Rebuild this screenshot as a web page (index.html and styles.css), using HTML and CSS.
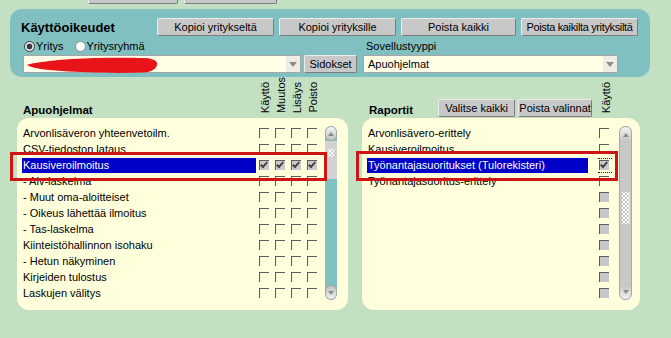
FILE: index.html
```html
<!DOCTYPE html>
<html>
<head>
<meta charset="utf-8">
<link rel="stylesheet" href="styles.css">
</head>
<body>
<div class="topcut"><div class="btn tc1"></div><div class="btn tc2"></div></div>

<div class="panel">
  <div class="prow">
    <div class="title">Käyttöoikeudet</div>
    <div class="btns">
      <div class="btn w117">Kopioi yritykseltä</div>
      <div class="btn w117">Kopioi yrityksille</div>
      <div class="btn w115">Poista kaikki</div>
      <div class="btn w117 tight">Poista kaikilta yrityksiltä</div>
    </div>
  </div>
  <div class="pgrid">
    <div class="radios">
      <span class="radio on"></span><span class="rlabel">Yritys</span>
      <span class="radio second"></span><span class="rlabel">Yritysryhmä</span>
    </div>
    <div class="lbl">Sovellustyyppi</div>
    <div class="selrow">
      <div class="select s1">
        <svg class="scribble" width="140" height="18" viewBox="0 0 140 18"><path d="M2,9 C6,7 30,4 47,3 C70,1.5 100,1.5 120,2 C130,2.5 133,6 132,9 C131,13 127,16 118,16.5 C90,17.5 60,16.5 37,15 C20,14 6,12 2,9 Z" fill="#e8141a"/></svg>
        <span class="arrow"></span>
      </div>
      <div class="btn sid">Sidokset</div>
    </div>
    <div class="select s2"><span class="txt">Apuohjelmat</span><span class="arrow"></span></div>
  </div>
</div>

<div class="lower">
  <section class="col left">
    <div class="hdr">
      <div class="sect">Apuohjelmat</div>
      <div class="vlabel">Käyttö</div>
      <div class="vlabel">Muutos</div>
      <div class="vlabel">Lisäys</div>
      <div class="vlabel">Poisto</div>
    </div>
    <div class="box">
      <div class="list">
        <div class="row"><div class="name">Arvonlisäveron yhteenvetoilm.</div><div class="cell"><span class="cb"></span></div><div class="cell"><span class="cb"></span></div><div class="cell"><span class="cb"></span></div><div class="cell"><span class="cb"></span></div></div>
        <div class="row"><div class="name">CSV-tiedoston lataus</div><div class="cell"><span class="cb"></span></div><div class="cell"><span class="cb"></span></div><div class="cell"><span class="cb"></span></div><div class="cell"><span class="cb"></span></div></div>
        <div class="row"><div class="name sel">Kausiveroilmoitus</div>
          <div class="cell"><span class="cb on"><svg viewBox="0 0 10 10"><path d="M1.8 4.6 L4 7 L8.2 2"/></svg></span></div>
          <div class="cell"><span class="cb on"><svg viewBox="0 0 10 10"><path d="M1.8 4.6 L4 7 L8.2 2"/></svg></span></div>
          <div class="cell"><span class="cb on"><svg viewBox="0 0 10 10"><path d="M1.8 4.6 L4 7 L8.2 2"/></svg></span></div>
          <div class="cell"><span class="cb on"><svg viewBox="0 0 10 10"><path d="M1.8 4.6 L4 7 L8.2 2"/></svg></span></div>
        </div>
        <div class="row"><div class="name">- Alv-laskelma</div><div class="cell"><span class="cb"></span></div><div class="cell"><span class="cb"></span></div><div class="cell"><span class="cb"></span></div><div class="cell"><span class="cb"></span></div></div>
        <div class="row"><div class="name">- Muut oma-aloitteiset</div><div class="cell"><span class="cb"></span></div><div class="cell"><span class="cb"></span></div><div class="cell"><span class="cb"></span></div><div class="cell"><span class="cb"></span></div></div>
        <div class="row"><div class="name">- Oikeus lähettää ilmoitus</div><div class="cell"><span class="cb"></span></div><div class="cell"><span class="cb"></span></div><div class="cell"><span class="cb"></span></div><div class="cell"><span class="cb"></span></div></div>
        <div class="row"><div class="name">- Tas-laskelma</div><div class="cell"><span class="cb"></span></div><div class="cell"><span class="cb"></span></div><div class="cell"><span class="cb"></span></div><div class="cell"><span class="cb"></span></div></div>
        <div class="row"><div class="name">Kiinteistöhallinnon isohaku</div><div class="cell"><span class="cb"></span></div><div class="cell"><span class="cb"></span></div><div class="cell"><span class="cb"></span></div><div class="cell"><span class="cb"></span></div></div>
        <div class="row"><div class="name">- Hetun näkyminen</div><div class="cell"><span class="cb"></span></div><div class="cell"><span class="cb"></span></div><div class="cell"><span class="cb"></span></div><div class="cell"><span class="cb"></span></div></div>
        <div class="row"><div class="name">Kirjeiden tulostus</div><div class="cell"><span class="cb"></span></div><div class="cell"><span class="cb"></span></div><div class="cell"><span class="cb"></span></div><div class="cell"><span class="cb"></span></div></div>
        <div class="row"><div class="name">Laskujen välitys</div><div class="cell"><span class="cb"></span></div><div class="cell"><span class="cb"></span></div><div class="cell"><span class="cb"></span></div><div class="cell"><span class="cb"></span></div></div>
      </div>
      <div class="sb">
        <div class="sbbtn up"></div>
        <div class="thumb"><span class="grip"></span></div>
        <div class="track"></div>
        <div class="sbbtn down"></div>
      </div>
    </div>
  </section>

  <section class="col right">
    <div class="hdr">
      <div class="sect">Raportit</div>
      <div class="hbtns">
        <div class="btn w77">Valitse kaikki</div>
        <div class="btn w74">Poista valinnat</div>
      </div>
      <div class="vlabel">Käyttö</div>
    </div>
    <div class="box">
      <div class="list">
        <div class="row"><div class="name">Arvonlisävero-erittely</div><div class="cell"><span class="cb"></span></div></div>
        <div class="row"><div class="name">Kausiveroilmoitus</div><div class="cell"><span class="cb"></span></div></div>
        <div class="row"><div class="name sel">Työnantajasuoritukset (Tulorekisteri)</div><div class="cell"><span class="cb on focus"><svg viewBox="0 0 10 10"><path d="M1.8 4.6 L4 7 L8.2 2"/></svg></span></div></div>
        <div class="row"><div class="name">Työnantajasuoritus-erittely</div><div class="cell"><span class="cb"></span></div></div>
        <div class="row"><div class="name"></div><div class="cell"><span class="cb dis"></span></div></div>
        <div class="row"><div class="name"></div><div class="cell"><span class="cb dis"></span></div></div>
        <div class="row"><div class="name"></div><div class="cell"><span class="cb dis"></span></div></div>
        <div class="row"><div class="name"></div><div class="cell"><span class="cb dis"></span></div></div>
        <div class="row"><div class="name"></div><div class="cell"><span class="cb dis"></span></div></div>
        <div class="row"><div class="name"></div><div class="cell"><span class="cb dis"></span></div></div>
        <div class="row"><div class="name"></div><div class="cell"><span class="cb dis"></span></div></div>
      </div>
      <div class="sb">
        <div class="sbbtn up"></div>
        <div class="thumb"><span class="grip"></span></div>
        <div class="track"></div>
        <div class="sbbtn down"></div>
      </div>
    </div>
  </section>
</div>

<div class="redbox r1"></div>
<div class="redbox r2"></div>
</body>
</html>
```

FILE: styles.css
```css
* { box-sizing: border-box; }
html, body { margin: 0; padding: 0; }
body {
  position: relative;
  width: 671px;
  height: 338px;
  overflow: hidden;
  background: #c3e0c3;
  font-family: "Liberation Sans", Arial, sans-serif;
  font-size: 11px;
  color: #000;
}

.btn {
  display: flex;
  align-items: center;
  justify-content: center;
  flex: none;
  height: 18px;
  background: #c8c8c8;
  border: 1px solid;
  border-color: #ececec #7c7c7c #7c7c7c #ececec;
  border-radius: 2px;
  white-space: nowrap;
  font-size: 11px;
}
.tight { letter-spacing: -0.35px; }

.topcut {
  display: flex;
  align-items: flex-end;
  gap: 6px;
  padding-left: 88px;
  height: 4px;
  overflow: hidden;
}
.tc1 { width: 90px; }
.tc2 { width: 93px; }

.panel {
  margin: 5px 0 0 10px;
  width: 640px;
  height: 68px;
  background: #80c0c0;
  border-radius: 12px;
  padding: 9px 12px 0 11px;
}
.prow { display: flex; align-items: center; height: 18px; }
.title { flex: 0 0 136px; font-weight: bold; font-size: 13px; }
.btns { display: flex; gap: 5px; }
.w117 { width: 117px; }
.w115 { width: 115px; }

.pgrid {
  display: grid;
  grid-template-columns: 340px 255px;
  grid-template-rows: 18px 18px;
  margin: 1px 0 0 2px;
}
.radios { display: flex; align-items: center; padding-left: 1px; }
.radio {
  width: 11px;
  height: 11px;
  border-radius: 50%;
  border: 1px solid #8c8c8c;
  background: #fff;
  margin-right: 1px;
}
.radio.on {
  border-color: #3c3c3c;
  background: radial-gradient(circle, #3a3a3a 0 2.6px, #e8e8e8 3.2px);
}
.radio.second { margin-left: 11px; }
.lbl { align-self: center; padding-left: 3px; }

.selrow { display: flex; gap: 3px; }
.select {
  position: relative;
  display: flex;
  align-items: center;
  height: 18px;
  background: #ffffe8;
  border: 1px solid #a6a6a6;
}
.s1 { width: 278px; }
.s2 { width: 255px; }
.select .txt { padding-left: 4px; }
.select .arrow {
  margin-left: auto;
  width: 14px;
  height: 16px;
  background: #eeeee4;
  display: flex;
  align-items: center;
  justify-content: center;
}
.select .arrow::after {
  content: "";
  border-left: 4px solid transparent;
  border-right: 4px solid transparent;
  border-top: 5px solid #8c8c8c;
}
.scribble { position: absolute; left: 1px; top: 0; }
.sid { width: 53px; }

.lower { display: flex; gap: 14px; padding-left: 17px; }
.col.left { width: 331px; }
.col.right { width: 278px; }

.hdr { height: 41px; display: flex; align-items: flex-end; }
.left .hdr { padding-left: 6px; }
.right .hdr { padding-left: 7px; }
.sect { font-weight: bold; font-size: 11.5px; line-height: 14px; margin-bottom: 1px; }
.left .sect { flex: 0 0 234px; }
.vlabel {
  writing-mode: vertical-rl;
  transform: rotate(180deg);
  width: 16px;
  line-height: 16px;
  margin-bottom: 5px;
  white-space: nowrap;
  flex: none;
}
.hbtns { display: flex; gap: 3px; margin-left: 25px; margin-bottom: 1px; }
.w77 { width: 77px; }
.w74 { width: 74px; }
.right .vlabel { margin-left: 6px; }

.box {
  height: 192px;
  background: #ffffdc;
  border-radius: 12px;
  display: flex;
  padding-top: 7px;
}
.left .box { padding-left: 5px; padding-right: 11px; }
.right .box { padding-left: 5px; padding-right: 8px; }
.list { display: flex; flex-direction: column; }
.row { display: flex; height: 16px; }
.name {
  height: 15px;
  margin-top: 1px;
  line-height: 15px;
  padding-left: 1px;
  white-space: nowrap;
  overflow: hidden;
}
.left .name { width: 234px; }
.right .name { width: 221px; margin-right: 8px; }
.sel { background: #0000c8; color: #fff; }

.cell { width: 16px; display: flex; justify-content: center; padding-top: 3px; }
.cb {
  position: relative;
  display: block;
  width: 10px;
  height: 10px;
  border-top: 1px solid #5c5c5c;
  border-left: 1px solid #5c5c5c;
}
.cb svg { position: absolute; left: -1px; top: -1px; width: 10px; height: 10px; }
.cb svg path { fill: none; stroke: #3a3a3a; stroke-width: 1.9; }
.cb.on { background: #cacaca; }
.cb.dis { background: #c6c6c6; }
.cb.focus::before {
  content: "";
  position: absolute;
  left: -2px;
  right: -3px;
  top: -3px;
  bottom: -3px;
  border-top: 1px dotted #222;
  border-bottom: 1px dotted #222;
}

.sb {
  margin-top: 1px;
  height: 174px;
  display: flex;
  flex-direction: column;
  border-radius: 6px;
  overflow: hidden;
  flex: none;
}
.left .sb { width: 12px; margin-left: 5px; background: #80c0c0; }
.right .sb { width: 13px; margin-left: 7px; background: #c8c8c8; border: 1px solid #a9a9a9; }
.sbbtn {
  height: 15px;
  flex: none;
  display: flex;
  align-items: center;
  justify-content: center;
  background: linear-gradient(#f6f6f6, #c2c2c2);
  border: 1px solid #a8a8a8;
  border-radius: 6px;
}
.right .sbbtn { border: none; }
.sbbtn.up::after {
  content: "";
  border-left: 3.5px solid transparent;
  border-right: 3.5px solid transparent;
  border-bottom: 4px solid #8a8a8a;
}
.sbbtn.down { background: linear-gradient(#c2c2c2, #f0f0f0); }
.sbbtn.down::after {
  content: "";
  border-left: 3.5px solid transparent;
  border-right: 3.5px solid transparent;
  border-top: 4px solid #8a8a8a;
}
.thumb {
  height: 38px;
  flex: none;
  display: flex;
  justify-content: center;
  padding-top: 8px;
}
.left .thumb { background: #d2d2d2; }
.right .thumb { height: 90px; padding-top: 50px; }
.grip {
  width: 8px;
  height: 20px;
  background-image:
    radial-gradient(circle, #ffffff 0 0.9px, transparent 1.3px),
    radial-gradient(circle, #ffffff 0 0.9px, transparent 1.3px);
  background-size: 4px 4px, 4px 4px;
  background-position: 0 0, 2px 2px;
}
.left .grip { height: 8px; width: 6px; }
.right .grip { height: 32px; }
.track { flex: 1; }

.redbox { position: absolute; border: 3px solid #cc1616; }
.r1 { left: 10px; top: 152px; width: 317px; height: 29px; }
.r2 { left: 356px; top: 151px; width: 262px; height: 30px; }
```
